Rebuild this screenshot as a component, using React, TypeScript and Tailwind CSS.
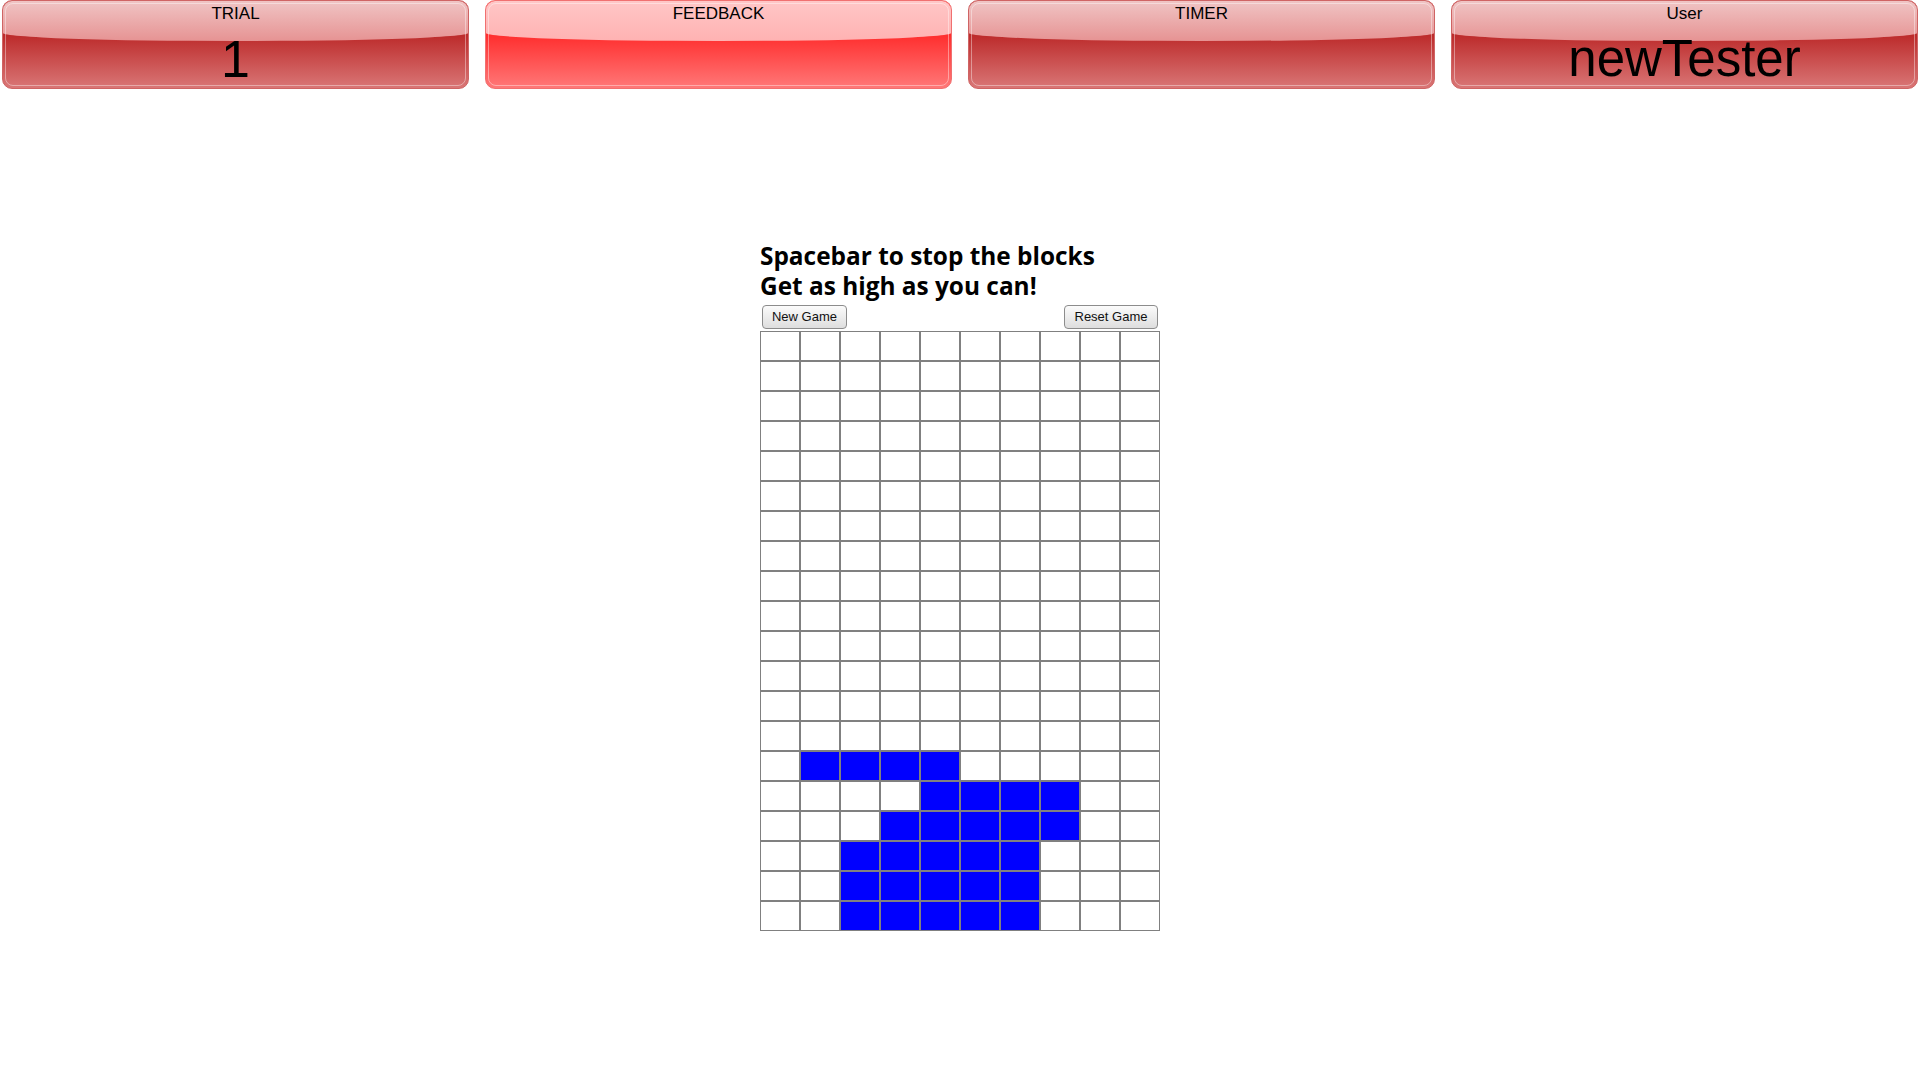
import React from 'react';

type PanelProps = {
  label: string;
  value?: string;
  bright?: boolean;
  valueClass?: string;
};

const Panel: React.FC<PanelProps> = ({ label, value, bright, valueClass }) => {
  const base = bright
    ? 'bg-[linear-gradient(to_bottom,#ff2f2f_40%,#ff7878_100%)] border-[#f07070]'
    : 'bg-[linear-gradient(to_bottom,#bd2c2c_40%,#d97676_100%)] border-[#cf6464]';
  const gloss = bright
    ? 'bg-[linear-gradient(to_bottom,#ffc6c6,#ffb2b2)]'
    : 'bg-[linear-gradient(to_bottom,#f0c4c4,#e69393)]';
  return (
    <div className={`relative flex-1 h-[89px] rounded-[10px] border overflow-hidden ${base}`}>
      <div className={`absolute inset-x-0 top-0 h-[40px] rounded-bl-[50%_8px] rounded-br-[50%_8px] ${gloss}`} />
      <div className="absolute inset-[2px] rounded-[8px] border border-white/40" />
      <div className="relative flex flex-col items-center text-black font-['Liberation_Sans',Arial,sans-serif]">
        <div className="text-[17px] leading-[20px] mt-[3px]">{label}</div>
        {value && <div className={`mt-[6px] leading-[58px] ${valueClass ?? ''}`}>{value}</div>}
      </div>
    </div>
  );
};

const filled: Record<number, number[]> = {
  14: [1, 2, 3, 4],
  15: [4, 5, 6, 7],
  16: [3, 4, 5, 6, 7],
  17: [2, 3, 4, 5, 6],
  18: [2, 3, 4, 5, 6],
  19: [2, 3, 4, 5, 6],
};

const rows = Array.from({ length: 20 }, (_, r) => r);
const cols = Array.from({ length: 10 }, (_, c) => c);

const App: React.FC = () => {
  return (
    <div className="min-h-screen bg-white">
      <div className="flex gap-4 px-[2px]">
        <Panel label="TRIAL" value="1" valueClass="text-[52px]" />
        <Panel label="FEEDBACK" bright />
        <Panel label="TIMER" />
        <Panel label="User" value="newTester" valueClass="text-[51px]" />
      </div>

      <div className="mt-[152px] flex justify-center">
        <div className="w-[400px]">
          <h2 className="font-['Open_Sans',sans-serif] font-bold text-[24.4px] leading-[30px] text-black">
            Spacebar to stop the blocks
            <br />
            Get as high as you can!
          </h2>
          <div className="mt-[4px] flex justify-between px-[2px] font-['Liberation_Sans',Arial,sans-serif] text-[13px] text-[#111]">
            <button className="w-[85px] h-[24px] rounded-[4px] border border-[#8c8c8c] bg-[linear-gradient(to_bottom,#fbfbfb,#dedede)]">
              New Game
            </button>
            <button className="w-[94px] h-[24px] rounded-[4px] border border-[#8c8c8c] bg-[linear-gradient(to_bottom,#fbfbfb,#dedede)]">
              Reset Game
            </button>
          </div>
          <table className="mt-[2px] w-[400px] border-separate border-spacing-0 table-fixed">
            <tbody>
              {rows.map((r) => (
                <tr key={r}>
                  {cols.map((c) => (
                    <td
                      key={c}
                      className={`h-[30px] border border-[#808080] p-0 ${
                        filled[r]?.includes(c) ? 'bg-[#0000ff]' : 'bg-white'
                      }`}
                    />
                  ))}
                </tr>
              ))}
            </tbody>
          </table>
        </div>
      </div>
    </div>
  );
};

export default App;
